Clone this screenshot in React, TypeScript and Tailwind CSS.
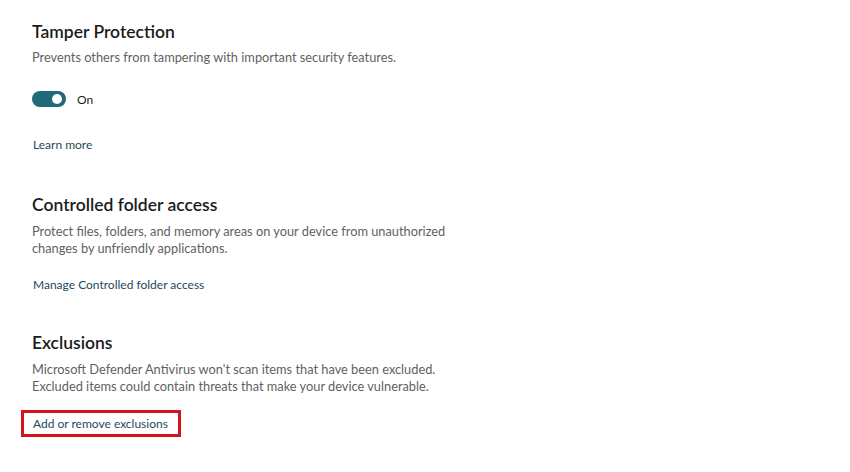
import React from 'react'

const font = { fontFamily: 'Lato, "Open Sans", sans-serif' }

function Toggle() {
  return (
    <div className="flex items-center h-[16px]">
      <div className="relative w-[34px] h-[16px] rounded-full bg-[#1e6a79]">
        <div className="absolute right-[4px] top-[3px] w-[10px] h-[10px] rounded-full bg-white" />
      </div>
      <span className="ml-[11px] text-[12px] leading-[17px] text-[#1b1b1b]">On</span>
    </div>
  )
}

export default function App() {
  return (
    <div className="w-[850px] h-[472px] bg-white overflow-hidden px-[32px]" style={font}>
      {/* Tamper Protection */}
      <h2 className="mt-[20px] text-[17.5px] leading-[24px] font-semibold text-[#1b1b1b]">Tamper Protection</h2>
      <p className="mt-[5px] text-[12.8px] leading-[17px] text-[#5f5f5f]">
        Prevents others from tampering with important security features.
      </p>
      <div className="mt-[25px]">
        <Toggle />
      </div>
      <div className="mt-[29px] pl-[1px] text-[12px] leading-[17px] text-[#1d4a58]">Learn more</div>

      {/* Controlled folder access */}
      <h2 className="mt-[40px] text-[17.5px] leading-[24px] font-semibold text-[#1b1b1b]">Controlled folder access</h2>
      <p className="mt-[6px] text-[12.8px] leading-[17px] text-[#5f5f5f]">
        Protect files, folders, and memory areas on your device from unauthorized
        <br />
        changes by unfriendly applications.
      </p>
      <div className="mt-[19px] pl-[1px] text-[12px] leading-[17px] text-[#1d4a58]">Manage Controlled folder access</div>

      {/* Exclusions */}
      <h2 className="mt-[38px] text-[17.5px] leading-[24px] font-semibold text-[#1b1b1b]">Exclusions</h2>
      <p className="mt-[6px] text-[12.8px] leading-[17px] text-[#5f5f5f]">
        Microsoft Defender Antivirus won't scan items that have been excluded.
        <br />
        Excluded items could contain threats that make your device vulnerable.
      </p>
      <div className="mt-[15px] ml-[-11px] w-[160px] h-[27px] border-[3px] border-[#d4141c] pl-[9px] flex items-center whitespace-nowrap">
        <span className="text-[12px] leading-[17px] text-[#1d4a58]">Add or remove exclusions</span>
      </div>
    </div>
  )
}
